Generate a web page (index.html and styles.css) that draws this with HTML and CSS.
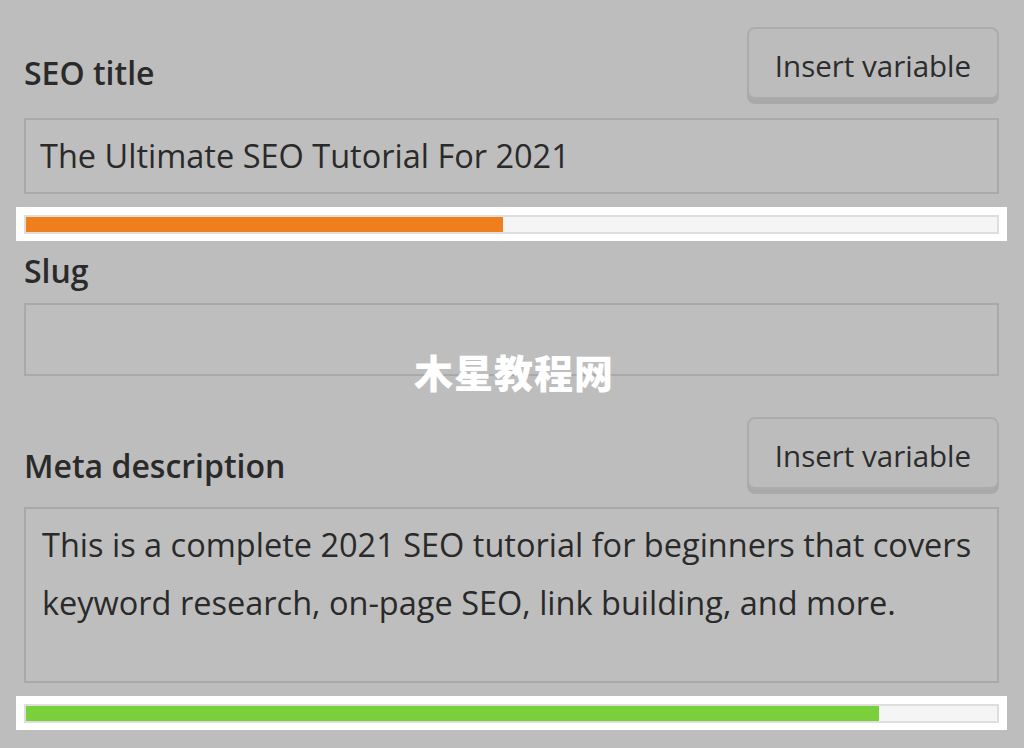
FILE: index.html
```html
<!DOCTYPE html>
<html lang="en">
<head>
    <meta charset="UTF-8">
    <title>SEO settings</title>
    <link rel="stylesheet" href="styles.css">
</head>
<body>
    <div class="panel">
        <div class="field">
            <div class="field-head">
                <div class="field-label">SEO title</div>
                <button class="insert-btn">Insert variable</button>
            </div>
            <div class="text-input">The Ultimate SEO Tutorial For 2021</div>
            <div class="progress">
                <div class="progress-track"><div class="progress-fill fill-orange" style="width: 49.1%"></div></div>
            </div>
        </div>

        <div class="field">
            <div class="field-label slug-label">Slug</div>
            <div class="text-input slug-input"></div>
        </div>

        <div class="field meta-field">
            <div class="field-head">
                <div class="field-label">Meta description</div>
                <button class="insert-btn">Insert variable</button>
            </div>
            <div class="text-area">This is a complete 2021 SEO tutorial for beginners that covers<br>keyword research, on-page SEO, link building, and more.</div>
            <div class="progress">
                <div class="progress-track"><div class="progress-fill fill-green" style="width: 87.8%"></div></div>
            </div>
        </div>
    </div>

    <div class="watermark">木星教程网</div>
</body>
</html>
```

FILE: styles.css
```css
* {
    box-sizing: border-box;
}

body {
    margin: 0;
    background: #bdbdbd;
    font-family: "Open Sans", "Noto Sans", sans-serif;
    color: #2a2a2a;
    position: relative;
    height: 748px;
    overflow: hidden;
}

.panel {
    padding: 27px 25px 0 24px;
}

.field-head {
    display: flex;
    justify-content: space-between;
    align-items: flex-end;
    margin-bottom: 14px;
}

.field-label {
    font-size: 32px;
    font-weight: 600;
    line-height: 40px;
    margin-bottom: 11px;
}

.insert-btn {
    font-family: inherit;
    font-size: 29.5px;
    color: #2c2c2c;
    height: 72px;
    width: 252px;
    padding: 5px 0 0;
    background: #bcbcbc;
    border: 2px solid #acacac;
    border-radius: 8px;
    box-shadow: 0 5px 0 #a9a9a9;
    margin-bottom: 5px;
}

.text-input {
    height: 76px;
    border: 2px solid #a9a9a9;
    background: #bebebe;
    padding: 0 14px;
    font-size: 32.5px;
    line-height: 72px;
    white-space: nowrap;
}

.progress {
    margin: 13px -8px 0;
    padding: 8px 8px 7px;
    background: #fff;
}

.progress-track {
    height: 19px;
    border: 2px solid #dedede;
    background: #f5f5f5;
}

.progress-fill {
    height: 100%;
}

.fill-orange {
    background: #ef7e1d;
}

.fill-green {
    background: #7ad03a;
}

.slug-label {
    margin: 10px 0 12px;
}

.slug-input {
    height: 73px;
}

.meta-field {
    margin-top: 41px;
}

.meta-field .field-label {
    margin-bottom: 8px;
}

.meta-field .field-head {
    margin-bottom: 13px;
}

.text-area {
    height: 176px;
    border: 2px solid #a9a9a9;
    background: #bebebe;
    padding: 7px 16px;
    font-size: 32.5px;
    line-height: 58px;
    white-space: nowrap;
}

.watermark {
    position: absolute;
    left: 414px;
    top: 352px;
    font-family: "Noto Sans CJK SC", sans-serif;
    font-weight: 900;
    font-size: 39px;
    line-height: 1;
    color: #fff;
    letter-spacing: 1px;
}
```
